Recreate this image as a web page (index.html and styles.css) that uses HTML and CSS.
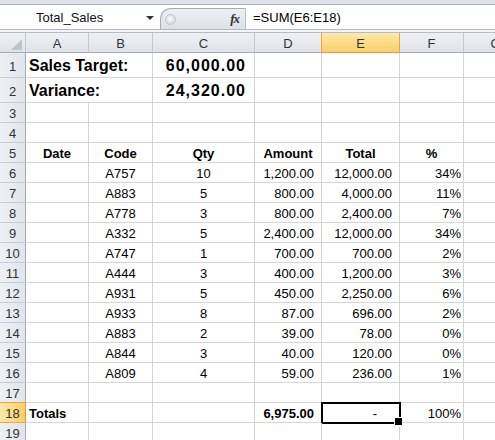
FILE: index.html
```html
<!DOCTYPE html>
<html>
<head>
<meta charset="utf-8">
<link rel="stylesheet" href="styles.css">
</head>
<body>
<div class="topstrip"></div>
<div class="fbar">
  <div class="namebox"><span>Total_Sales</span><span class="arrow"></span></div>
  <div class="pill"><span class="grip"></span><span class="fx">fx</span></div>
  <div class="formula">=SUM(E6:E18)</div>
</div>
<div class="gap"></div>
<div class="sheet">
  <div class="row hdr">
    <div class="c corner"><svg width="26" height="20" viewBox="0 0 26 20"><polygon points="11,17 22,17 22,6" fill="#bcc3cb"/></svg></div>
    <div class="c ch">A</div><div class="c ch">B</div><div class="c ch">C</div><div class="c ch pre">D</div><div class="c ch sel">E</div><div class="c ch">F</div><div class="c ch">G</div>
  </div>
  <div class="row tall">
    <div class="c rh">1</div><div class="c span2 big">Sales Target:</div><div class="c r big num">60,000.00</div><div class="c"></div><div class="c"></div><div class="c"></div><div class="c"></div>
  </div>
  <div class="row tall">
    <div class="c rh">2</div><div class="c span2 big">Variance:</div><div class="c r big num">24,320.00</div><div class="c"></div><div class="c"></div><div class="c"></div><div class="c"></div>
  </div>
  <div class="row">
    <div class="c rh">3</div><div class="c"></div><div class="c"></div><div class="c"></div><div class="c"></div><div class="c"></div><div class="c"></div><div class="c"></div>
  </div>
  <div class="row">
    <div class="c rh">4</div><div class="c"></div><div class="c"></div><div class="c"></div><div class="c"></div><div class="c"></div><div class="c"></div><div class="c"></div>
  </div>
  <div class="row">
    <div class="c rh">5</div><div class="c ctr b">Date</div><div class="c ctr b">Code</div><div class="c ctr b">Qty</div><div class="c ctr b">Amount</div><div class="c ctr b">Total</div><div class="c ctr b">%</div><div class="c"></div>
  </div>
  <div class="row">
    <div class="c rh">6</div><div class="c"></div><div class="c ctr">A757</div><div class="c ctr">10</div><div class="c r acc">1,200.00</div><div class="c r acc">12,000.00</div><div class="c r pct">34%</div><div class="c"></div>
  </div>
  <div class="row">
    <div class="c rh">7</div><div class="c"></div><div class="c ctr">A883</div><div class="c ctr">5</div><div class="c r acc">800.00</div><div class="c r acc">4,000.00</div><div class="c r pct">11%</div><div class="c"></div>
  </div>
  <div class="row">
    <div class="c rh">8</div><div class="c"></div><div class="c ctr">A778</div><div class="c ctr">3</div><div class="c r acc">800.00</div><div class="c r acc">2,400.00</div><div class="c r pct">7%</div><div class="c"></div>
  </div>
  <div class="row">
    <div class="c rh">9</div><div class="c"></div><div class="c ctr">A332</div><div class="c ctr">5</div><div class="c r acc">2,400.00</div><div class="c r acc">12,000.00</div><div class="c r pct">34%</div><div class="c"></div>
  </div>
  <div class="row">
    <div class="c rh">10</div><div class="c"></div><div class="c ctr">A747</div><div class="c ctr">1</div><div class="c r acc">700.00</div><div class="c r acc">700.00</div><div class="c r pct">2%</div><div class="c"></div>
  </div>
  <div class="row">
    <div class="c rh">11</div><div class="c"></div><div class="c ctr">A444</div><div class="c ctr">3</div><div class="c r acc">400.00</div><div class="c r acc">1,200.00</div><div class="c r pct">3%</div><div class="c"></div>
  </div>
  <div class="row">
    <div class="c rh">12</div><div class="c"></div><div class="c ctr">A931</div><div class="c ctr">5</div><div class="c r acc">450.00</div><div class="c r acc">2,250.00</div><div class="c r pct">6%</div><div class="c"></div>
  </div>
  <div class="row">
    <div class="c rh">13</div><div class="c"></div><div class="c ctr">A933</div><div class="c ctr">8</div><div class="c r acc">87.00</div><div class="c r acc">696.00</div><div class="c r pct">2%</div><div class="c"></div>
  </div>
  <div class="row">
    <div class="c rh">14</div><div class="c"></div><div class="c ctr">A883</div><div class="c ctr">2</div><div class="c r acc">39.00</div><div class="c r acc">78.00</div><div class="c r pct">0%</div><div class="c"></div>
  </div>
  <div class="row">
    <div class="c rh">15</div><div class="c"></div><div class="c ctr">A844</div><div class="c ctr">3</div><div class="c r acc">40.00</div><div class="c r acc">120.00</div><div class="c r pct">0%</div><div class="c"></div>
  </div>
  <div class="row">
    <div class="c rh">16</div><div class="c"></div><div class="c ctr">A809</div><div class="c ctr">4</div><div class="c r acc">59.00</div><div class="c r acc">236.00</div><div class="c r pct">1%</div><div class="c"></div>
  </div>
  <div class="row">
    <div class="c rh rh-pre">17</div><div class="c"></div><div class="c"></div><div class="c"></div><div class="c"></div><div class="c"></div><div class="c"></div><div class="c"></div>
  </div>
  <div class="row">
    <div class="c rh sel">18</div><div class="c b">Totals</div><div class="c"></div><div class="c"></div><div class="c r acc b">6,975.00</div><div class="c r dash active">-</div><div class="c r pct">100%</div><div class="c"></div>
  </div>
  <div class="row">
    <div class="c rh">19</div><div class="c"></div><div class="c"></div><div class="c"></div><div class="c"></div><div class="c"></div><div class="c"></div><div class="c"></div>
  </div>
</div>
</body>
</html>
```
FILE: styles.css
```css
* { box-sizing: border-box; }
html, body { margin: 0; padding: 0; }
body {
  width: 495px;
  height: 440px;
  overflow: hidden;
  background: #fff;
  font-family: "Liberation Sans", Arial, sans-serif;
  font-size: 13px;
  color: #000;
}
.topstrip {
  height: 5px;
  background: #dfe3e9;
  border-bottom: 1px solid #a9b0ba;
}
.fbar {
  display: flex;
  align-items: flex-end;
  height: 25px;
  border-bottom: 1px solid #b3b9c2;
  background: #fff;
}
.namebox {
  width: 160px;
  height: 24px;
  display: flex;
  align-items: center;
  padding-left: 36px;
  padding-right: 6px;
  color: #111;
}
.arrow {
  margin-left: auto;
  width: 0;
  height: 0;
  border-left: 4px solid transparent;
  border-right: 4px solid transparent;
  border-top: 4px solid #333;
  margin-top: 2px;
}
.pill {
  width: 86px;
  height: 21px;
  border: 1px solid #a6adb6;
  border-right-color: #b9bfc7;
  border-bottom: none;
  border-radius: 11px 0 0 0;
  background: linear-gradient(#eef0f3, #dde1e6);
  display: flex;
  align-items: center;
  padding: 0 6px 0 4px;
}
.grip {
  width: 11px;
  height: 11px;
  border-radius: 50%;
  background: radial-gradient(circle at 45% 40%, #fafbfc, #c9ced5);
  border: 1px solid #c2c7ce;
}
.fx {
  margin-left: auto;
  font-family: "Liberation Serif", "Times New Roman", serif;
  font-style: italic;
  font-weight: bold;
  font-size: 13px;
  color: #333;
  letter-spacing: -1px;
}
.formula {
  flex: 1;
  height: 24px;
  display: flex;
  align-items: center;
  padding-left: 7px;
}
.gap {
  height: 3px;
  background: #f2f4f7;
  border-bottom: 1px solid #b5bcc6;
}
.sheet { width: 560px; }
.row {
  display: grid;
  grid-template-columns: 26px 63px 64px 102px 67px 78px 64px 64px;
  height: 20px;
}
.row.tall { height: 25px; }
.c {
  border-right: 1px solid #d6d6d6;
  border-bottom: 1px solid #d6d6d6;
  display: flex;
  align-items: flex-end;
  padding: 0 3px 1px;
  line-height: 15px;
  white-space: nowrap;
  overflow: hidden;
  position: relative;
}
.span2 { grid-column: span 2; }
.r { justify-content: flex-end; }
.ctr { justify-content: center; }
.b { font-weight: bold; }
.big { font-size: 16px; font-weight: bold; line-height: 18px; padding-bottom: 2px; }
.num { letter-spacing: 1px; padding-right: 8px; }
.acc { padding-right: 7px; }
.pct { padding-right: 2px; }
.dash { padding-right: 22px; }
.hdr .c {
  background: linear-gradient(#eef1f4, #dfe3e8);
  border-right: 1px solid #c2c8d0;
  border-bottom: 1px solid #a3acb8;
  justify-content: center;
  color: #333;
  padding: 0 0 1px;
}
.hdr .corner { display: block; padding: 0; }
.hdr .corner svg { display: block; }
.hdr .pre { border-right-color: #f2a53f; }
.hdr .sel {
  background: linear-gradient(#fde9a9, #f8cf6a);
  border-right-color: #f2a53f;
  border-bottom-color: #f29436;
}
.rh {
  background: linear-gradient(90deg, #eef1f4, #e1e5ea);
  border-right: 1px solid #a3acb8;
  border-bottom: 1px solid #c6ccd4;
  justify-content: center;
  color: #333;
  padding: 0 0 1px;
}
.tall .rh { padding-bottom: 3px; }
.rh-pre { border-bottom-color: #f2a53f; }
.rh.sel {
  background: linear-gradient(90deg, #fde9a9, #f8cf6a);
  border-right-color: #f29436;
  border-bottom-color: #f2a53f;
}
.active { overflow: visible; }
.active::after {
  content: "";
  position: absolute;
  top: -1px;
  left: -1px;
  right: -2px;
  bottom: -2px;
  border: 2px solid #000;
}
.active::before {
  content: "";
  position: absolute;
  right: -4px;
  bottom: -4px;
  width: 7px;
  height: 7px;
  background: #000;
  border: 1px solid #fff;
  z-index: 2;
}
```
